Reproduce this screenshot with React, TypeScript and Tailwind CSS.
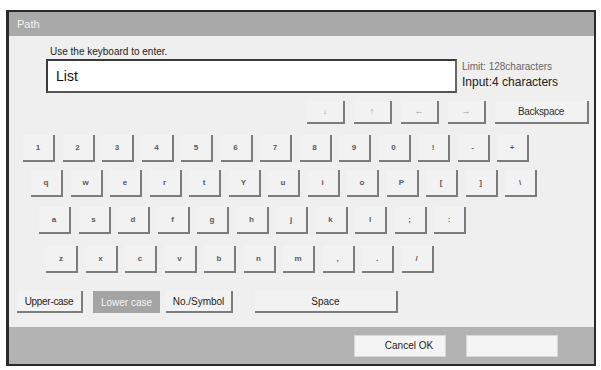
import React from "react";

const rows: { keys: string[]; ml: string; mt: string }[] = [
  { keys: ["1", "2", "3", "4", "5", "6", "7", "8", "9", "0", "!", "-", "+"], ml: "ml-[14px]", mt: "mt-[11px]" },
  { keys: ["q", "w", "e", "r", "t", "Y", "u", "i", "o", "P", "[", "]", "\\"], ml: "ml-[22px]", mt: "mt-[8px]" },
  { keys: ["a", "s", "d", "f", "g", "h", "j", "k", "l", ";", ":"], ml: "ml-[30px]", mt: "mt-[10px]" },
  { keys: ["z", "x", "c", "v", "b", "n", "m", ",", ".", "/"], ml: "ml-[37px]", mt: "mt-[12px]" },
];

function Key({ label, className = "w-[32px] h-[27px]" }: { label: string; className?: string }) {
  return (
    <div
      className={`${className} flex items-center justify-center bg-[#f2f2f2] border-r-2 border-b-2 border-[#7c7c7c] text-[8px] font-bold text-[#5a5a5a]`}
    >
      {label}
    </div>
  );
}

export default function App() {
  return (
    <div
      className="w-[601px] h-[370px] bg-white pt-[10px] pl-[6px]"
      style={{ fontFamily: '"Liberation Sans", Arial, sans-serif' }}
    >
      <div className="w-[590px] h-[356px] border-2 border-l-[3px] border-[#2a2a2a] flex flex-col">
        {/* title */}
        <div className="h-[24px] bg-[#a9a9a9] flex items-center pl-[8px] text-[11px] text-[#f4f4f4]">Path</div>

        {/* body */}
        <div className="flex-1 bg-[#efefef] flex flex-col">
          <div className="flex mt-[10px]">
            <div className="ml-[37px] flex flex-col">
              <div className="text-[10px] leading-[12px] text-[#222] pl-[4px]">Use the keyboard to enter.</div>
              <div className="w-[411px] h-[34px] mt-[1px] bg-white border-2 border-[#3a3a3a] border-r-[#666] border-b-[#555] pl-[8px] pt-[5px] text-[14px] text-[#111]">
                List
              </div>
            </div>
            <div className="ml-[5px] mt-[15px] flex flex-col">
              <div className="text-[10px] leading-[12px] text-[#666]">Limit: 128characters</div>
              <div className="text-[12px] leading-[15px] mt-[2px] text-[#222]">Input:4 characters</div>
            </div>
          </div>

          <div className="flex mt-[8px] ml-[298px] gap-[9px]">
            <Key label="↓" className="w-[38px] h-[23px] !font-normal !text-[9px] !text-[#999]" />
            <Key label="↑" className="w-[38px] h-[23px] !font-normal !text-[9px] !text-[#999]" />
            <Key label="←" className="w-[38px] h-[23px] !font-normal !text-[9px] !text-[#999]" />
            <Key label="→" className="w-[38px] h-[23px] !font-normal !text-[9px] !text-[#999]" />
            <Key label="Backspace" className="w-[94px] h-[23px] !font-normal !text-[10px] !text-[#333] tracking-[-0.3px]" />
          </div>

          {rows.map((r, i) => (
            <div key={i} className={`flex gap-[7.5px] ${r.ml} ${r.mt}`}>
              {r.keys.map((k) => (
                <Key key={k} label={k} />
              ))}
            </div>
          ))}

          <div className="flex mt-[18px] ml-[8px] items-center">
            <div className="w-[66px] h-[22px] flex items-center justify-center bg-[#f2f2f2] border-r-2 border-b-2 border-[#7c7c7c] text-[10px] text-[#222] tracking-[-0.3px]">
              Upper-case
            </div>
            <div className="ml-[10px] w-[67px] h-[22px] flex items-center justify-center bg-[#a4a4a4] text-[10px] text-[#f4f4f4]">
              Lower case
            </div>
            <div className="ml-[6px] w-[67px] h-[22px] flex items-center justify-center bg-[#f2f2f2] border-r-2 border-b-2 border-[#7c7c7c] text-[10px] text-[#222]">
              No./Symbol
            </div>
            <div className="ml-[22px] w-[143px] h-[22px] flex items-center justify-center bg-[#f2f2f2] border-r-2 border-b-2 border-[#7c7c7c] text-[10px] text-[#222]">
              Space
            </div>
          </div>
        </div>

        {/* footer */}
        <div className="h-[37px] bg-[#b3b3b3] flex items-center">
          <div className="ml-[345px] w-[92px] h-[22px] bg-[#f4f4f4] border border-[#d8d8d8] flex items-center justify-center pl-[18px] text-[10px] text-[#222]">
            Cancel OK
          </div>
          <div className="ml-[20px] w-[92px] h-[22px] bg-[#f4f4f4] border border-[#d8d8d8]" />
        </div>
      </div>
    </div>
  );
}
